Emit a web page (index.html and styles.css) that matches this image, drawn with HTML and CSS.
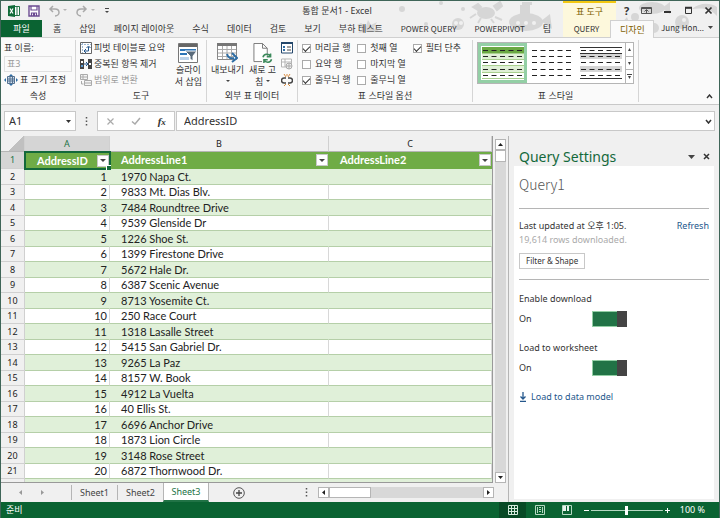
FILE: index.html
```
<!DOCTYPE html>
<html lang="ko">
<head>
    <meta charset="UTF-8">
    <meta name="viewport" content="width=device-width, initial-scale=1.0">
    <title>통합 문서1 - Excel</title>
    <link rel="stylesheet" href="styles.css">
</head>
<body>
    <div class="window">
        <header class="header">
            <svg class="header-art" width="370" height="36" viewBox="0 0 370 36" aria-hidden="true">
                <g fill="#d6d6d6">
                    <circle cx="53" cy="8" r="3"/><circle cx="114" cy="8" r="2"/><circle cx="92" cy="2" r="2"/><circle cx="77" cy="23" r="2"/>
                    <path d="M12 22l5 3 2-6 3 5 6-3-3 6 5 3-7 1-8 0-6 1 4-4-5-4z"/>
                    <circle cx="109" cy="23" r="6"/>
                    <ellipse cx="137" cy="12" rx="9" ry="6"/>
                    <path d="M124 6l5-3 3 3-3 3zM145 5l6-4 2 4-5 4zM127 13l-6 4M146 16l7 3M132 17l-3 5M142 18l3 4" stroke="#d6d6d6" stroke-width="2"/>
                    <ellipse cx="177" cy="21" rx="17" ry="9"/><path d="M171 14V4h10v10zM173 5V1h10v3h-7v2zM192 20l9-7 2 15z"/>
                    <circle cx="221" cy="7" r="5"/><circle cx="229" cy="15" r="3"/>
                    <path d="M261 24l6-5 5 4 6-7 3 8-7 7h-9z"/>
                    <ellipse cx="303" cy="7" rx="13" ry="6"/><path d="M313 7l8-6v12z"/><circle cx="286" cy="16" r="4"/>
                    <circle cx="333" cy="21" r="7"/><path d="M343 8c9-7 18-6 25-2v9c-7-8-15-8-25-7z"/><circle cx="305" cy="27" r="5"/>
                </g>
                <g fill="#f0f0f0"><circle cx="169" cy="22" r="2"/><circle cx="177" cy="22" r="2"/><circle cx="185" cy="22" r="2"/><circle cx="107" cy="22" r="2"/><circle cx="112" cy="22" r="2"/><circle cx="335" cy="19" r="2"/></g>
            </svg>
            <div class="title-row">
                <div class="quick-access">
                    <svg class="app-logo" width="12" height="12" viewBox="0 0 12 12" aria-hidden="true"><path d="M6 1.500h5.500v9H6" fill="#fff" stroke="#217346"/><path d="M8 3h2M8 5h2M8 7h2M8 9h2" stroke="#217346"/><path d="M0 1l7-1v12l-7-1z" fill="#0f6b38"/><path d="M2 3.500l3 5M5 3.500l-3 5" stroke="#fff" stroke-width="1.200"/></svg>
                    <button class="icon-button" aria-label="저장"><svg width="12" height="12" viewBox="0 0 12 12"><path d="M1 1h10v10H1z" fill="#fff" stroke="#6b4a91" stroke-width="1.400"/><path d="M3 1v4h6V1M3.500 11V8h5v3" fill="none" stroke="#6b4a91" stroke-width="1.200"/><path d="M5 8h2v3H5z" fill="#6b4a91"/></svg></button>
                    <button class="icon-button" aria-label="실행 취소"><svg width="20" height="12" viewBox="0 0 20 12"><path d="M5 1L2 4l3 3M2 4h5c3 0 4 2 4 3.500S9.500 11 7 11" fill="none" stroke="#a9a9a9" stroke-width="1.500"/><path d="M15 4h4l-2 2z" fill="#b5b5b5"/></svg></button>
                    <button class="icon-button" aria-label="다시 실행"><svg width="20" height="12" viewBox="0 0 20 12"><path d="M7 1l3 3-3 3M10 4H5C2 4 1 6 1 7.500S2.500 11 5 11" fill="none" stroke="#a9a9a9" stroke-width="1.500"/><path d="M15 4h4l-2 2z" fill="#b5b5b5"/></svg></button>
                    <button class="icon-button" aria-label="빠른 실행 도구 모음 사용자 지정"><svg width="6" height="6" viewBox="0 0 6 6"><path d="M1 .5h4" stroke="#444"/><path d="M1 3h4L3 5z" fill="#444"/></svg></button>
                </div>
                <h1 class="title">통합 문서1 - Excel</h1>
                <div class="context-title">표 도구</div>
                <div class="window-buttons">
                    <button class="icon-button help" aria-label="도움말">?</button>
                    <button class="icon-button" aria-label="리본 메뉴 표시 옵션"><svg width="11" height="9" viewBox="0 0 11 9"><path d="M.5 1.500h10v6H.5zM.5 2.500h10M5.500 7V4M3.500 5.500l2-2 2 2" fill="none" stroke="#555"/></svg></button>
                    <button class="icon-button" aria-label="최소화"><svg width="9" height="9" viewBox="0 0 9 9"><path d="M1 6h7" stroke="#333" stroke-width="2"/></svg></button>
                    <button class="icon-button" aria-label="최대화"><svg width="9" height="9" viewBox="0 0 9 9"><path d="M1.500 2h6v5.500h-6zM1 2h7" fill="none" stroke="#333"/><path d="M1 1.500h7" stroke="#333" stroke-width="1.500"/></svg></button>
                    <button class="icon-button" aria-label="닫기"><svg width="9" height="9" viewBox="0 0 9 9"><path d="M1.500 1.500l6 6M7.500 1.500l-6 6" stroke="#333" stroke-width="1.700"/></svg></button>
                </div>
            </div>
            <nav class="tab-row">
                <button class="file-tab">파일</button>
                <div class="tabs">
                    <button class="tab">홈</button>
                    <button class="tab">삽입</button>
                    <button class="tab">페이지 레이아웃</button>
                    <button class="tab">수식</button>
                    <button class="tab">데이터</button>
                    <button class="tab">검토</button>
                    <button class="tab">보기</button>
                    <button class="tab">부하 테스트</button>
                    <button class="tab latin">POWER QUERY</button>
                    <button class="tab latin">POWERPIVOT</button>
                    <button class="tab">팀</button>
                </div>
                <button class="tab latin context-tab">QUERY</button>
                <button class="tab active-tab">디자인</button>
                <button class="account latin">Jung Hon... <svg width="5" height="4" viewBox="0 0 5 4"><path d="M0 0h5L2.500 3z" fill="#444"/></svg></button>
            </nav>
        </header>

        <section class="ribbon">
            <div class="group group-properties">
                <div class="group-body rows">
                    <label for="table-name">표 이름:</label>
                    <input class="table-name" id="table-name" type="text" value="표3">
                    <button class="command"><svg width="14" height="12" viewBox="0 0 14 12"><path d="M3.500 2.500h7v7h-7zM3.500 5h7M3.500 7h7M6 2.500v7M8.500 2.500v7" fill="#cfe0f0" stroke="#55718f"/><path d="M5 2l2-2 2 2zM5 10l2 2 2-2zM2 4L0 6l2 2zM12 4l2 2-2 2z" fill="#2e6da4"/></svg>표 크기 조정</button>
                </div>
                <div class="group-label">속성</div>
            </div>
            <div class="group group-tools">
                <div class="group-body">
                    <div class="rows">
                        <button class="command"><svg width="12" height="12" viewBox="0 0 12 12"><path d="M.5.5h11v11H.5z" fill="#fff" stroke="#666"/><path d="M1 2.500h10M2.500 1v10" stroke="#9bb7d4" stroke-dasharray="2 1"/><path d="M5 9h3.500V5M4 9l2-2M4 9l2 2M8.500 4l-2 2M8.500 4l2 2" fill="none" stroke="#24578c"/></svg>피벗 테이블로 요약</button>
                        <button class="command"><svg width="12" height="12" viewBox="0 0 12 12"><path d="M0 1h4v10H0zM8 1h4v10H8z" fill="#444"/><path d="M1 3h2v2H1zM9 5h2v2H9z" fill="#fff"/><path d="M1 7h2v2H1z" fill="#5b9bd5"/><path d="M4 6h4M6 4l2 2-2 2" fill="none" stroke="#24578c"/></svg>중복된 항목 제거</button>
                        <button class="command" disabled><svg width="12" height="12" viewBox="0 0 12 12"><path d="M.5.5h7v5h-7zM.5 3h7M3 .5v5M4.500 6.500h7v5h-7zM4.500 9h7M1.500 7v3h2" fill="#f4f4f4" stroke="#aaa"/></svg>범위로 변환</button>
                    </div>
                    <button class="big-command"><svg width="20" height="20" viewBox="0 0 20 20"><path d="M.5.500h19v19H.5z" fill="#fff" stroke="#777"/><path d="M1 1h18v3H1z" fill="#666"/><path d="M2 6h16v2H2zM2 10h7v2H2z" fill="#2e75b6"/><path d="M2 14h9v3H2z" fill="#bcd2e8"/><path d="M7 8h12l-4 5v5l-3-2v-3z" fill="#5a6b7b" stroke="#fff"/></svg>슬라이<br>서 삽입</button>
                </div>
                <div class="group-label">도구</div>
            </div>
            <div class="group group-external">
                <div class="group-body">
                    <button class="big-command"><svg width="21" height="20" viewBox="0 0 21 20"><path d="M.5.500h19v16H.5z" fill="#fff" stroke="#888"/><path d="M0 0h20v3H0z" fill="#777"/><path d="M1 6.500h18M1 10h18M1 13.500h18M5.500 3v13M10 3v13M14.500 3v13" stroke="#aaa"/><path d="M10 11c1 4 4 5 7 4M15 10l5 5-5 4" fill="none" stroke="#2e6da4" stroke-width="2"/></svg>내보내기<span><svg width="5" height="4" viewBox="0 0 5 4"><path d="M1 0h4L3 2z" fill="#444"/></svg></span></button>
                    <button class="big-command"><svg width="21" height="20" viewBox="0 0 21 21"><path d="M1.500.500h9l5 5v14h-14zM10.500.500v5h5" fill="#fff" stroke="#777"/><path d="M10 14h11v7H10z" fill="#fafafa"/><path d="M11 15c1-4 6-4 8-1M19 11v3.500h-4M20 17c-1 4-6 4-8 1M12 21v-3.500h4" fill="none" stroke="#3c8a5c" stroke-width="1.600"/></svg>새로 고<br><span>침 <svg width="5" height="5" viewBox="0 0 5 5"><path d="M1 0h4L3 2z" fill="#444"/></svg></span></button>
                    <div class="rows">
                        <button class="icon-button" aria-label="속성"><svg width="12" height="12" viewBox="0 0 12 12"><path d="M.5 1h11v10H.5z" fill="#fff" stroke="#24476b"/><path d="M0 0h12v2H0z" fill="#24476b"/><path d="M2 4h2v2H2zM2 7h2v2H2z" fill="#2e6da4"/><path d="M6 5h4M6 8h4" stroke="#444"/></svg></button>
                        <button class="icon-button" aria-label="브라우저에서 열기" disabled><svg width="12" height="12" viewBox="0 0 12 12"><path d="M.5 1h10v8H.5zM.5 4h10M4 1v8" fill="#fff" stroke="#b5b5b5"/><circle cx="8" cy="8" r="3" fill="#eee" stroke="#aaa"/><path d="M5 8h6M8 5v6" stroke="#aaa"/></svg></button>
                        <button class="icon-button" aria-label="연결 끊기"><svg width="12" height="12" viewBox="0 0 12 12"><path d="M5 4H3a2 2 0 0 0 0 5h2M7 4h2a2 2 0 0 1 0 5H7" fill="none" stroke="#444" stroke-width="1.500"/><path d="M3 0l2 3M9 0L7 3M6 0v2M3 12l2-2M9 12l-2-2" stroke="#d98a3d"/></svg></button>
                    </div>
                </div>
                <div class="group-label">외부 표 데이터</div>
            </div>
            <div class="group group-options">
                <div class="group-body">
                    <div class="rows">
                        <label class="check"><input type="checkbox" checked>머리글 행</label>
                        <label class="check"><input type="checkbox">요약 행</label>
                        <label class="check"><input type="checkbox" checked>줄무늬 행</label>
                    </div>
                    <div class="rows">
                        <label class="check"><input type="checkbox">첫째 열</label>
                        <label class="check"><input type="checkbox">마지막 열</label>
                        <label class="check"><input type="checkbox">줄무늬 열</label>
                    </div>
                    <div class="rows">
                        <label class="check"><input type="checkbox" checked>필터 단추</label>
                    </div>
                </div>
                <div class="group-label">표 스타일 옵션</div>
            </div>
            <div class="group group-styles">
                <div class="group-body">
                    <div class="gallery">
                        <button class="style-item selected" aria-label="녹색 표 스타일"><svg width="42" height="32" viewBox="0 0 42 32"><path d="M0 0h42v32H0z" fill="#fff"/><path d="M0 0h42v6H0z" fill="#6aa842"/><path d="M0 6h42v6H0zM0 19h42v6H0z" fill="#e0f0d6"/><path d="M0 6.500h42M0 12.500h42M0 18.500h42M0 25.500h42M0 31.500h42" stroke="#a9d08e"/><path d="M1 3.500h40M1 9.500h40M1 15.500h40M1 22.500h40M1 28.500h40" stroke="#222" stroke-dasharray="5 3.500"/></svg></button>
                        <button class="style-item" aria-label="기본 표 스타일"><svg width="42" height="32" viewBox="0 0 42 32"><path d="M1 3.500h40M1 9.500h40M1 15.500h40M1 22.500h40M1 28.500h40" stroke="#222" stroke-dasharray="5 3.500"/></svg></button>
                        <button class="style-item" aria-label="회색 표 스타일"><svg width="42" height="32" viewBox="0 0 42 32"><path d="M0 7h42v5H0zM0 19h42v6H0z" fill="#d5d5d5"/><path d="M0 .500h42M0 6.500h42M0 31.500h42" stroke="#333"/><path d="M1 3.500h40M1 9.500h40M1 15.500h40M1 22.500h40M1 28.500h40" stroke="#222" stroke-dasharray="5 3.500"/></svg></button>
                        <div class="gallery-scroll">
                            <button aria-label="이전 행"><svg width="5" height="3" viewBox="0 0 5 3"><path d="M1 3h3L2.500 0z" fill="#444"/></svg></button>
                            <button aria-label="다음 행"><svg width="5" height="3" viewBox="0 0 5 3"><path d="M1 0h3L2.500 3z" fill="#444"/></svg></button>
                            <button aria-label="자세히"><svg width="5" height="5" viewBox="0 0 5 5"><path d="M0 .500h5" stroke="#444"/><path d="M1 2h3L2.500 5z" fill="#444"/></svg></button>
                        </div>
                    </div>
                </div>
                <div class="group-label">표 스타일</div>
            </div>
            <button class="icon-button collapse" aria-label="리본 메뉴 축소"><svg width="7" height="5" viewBox="0 0 7 5"><path d="M1 4l2.500-3L6 4" fill="none" stroke="#333" stroke-width="1.400"/></svg></button>
        </section>

        <section class="formula-bar">
            <div class="name-box">
                <input type="text" value="A1" aria-label="이름 상자">
                <button class="icon-button" aria-label="이름 목록"><svg width="5" height="3" viewBox="0 0 5 3"><path d="M0 0h5L2.500 3z" fill="#333"/></svg></button>
            </div>
            <svg class="grip" width="3" height="9" viewBox="0 0 3 9" aria-hidden="true"><path d="M1.500 0v9" stroke="#555" stroke-width="1.500" stroke-dasharray="1.500 2"/></svg>
            <div class="formula-buttons">
                <button class="icon-button" aria-label="취소"><svg width="9" height="9" viewBox="0 0 9 9"><path d="M1.500 1.500l6 6M7.500 1.500l-6 6" stroke="#aaa" stroke-width="1.200"/></svg></button>
                <button class="icon-button" aria-label="입력"><svg width="10" height="8" viewBox="0 0 10 8"><path d="M1 4.500L4 7l5-6" fill="none" stroke="#aaa" stroke-width="1.500"/></svg></button>
                <button class="icon-button fx" aria-label="함수 삽입">f<small>x</small></button>
            </div>
            <div class="formula-input">
                <input type="text" value="AddressID" aria-label="수식 입력줄">
                <button class="icon-button" aria-label="수식 입력줄 확장"><svg width="7" height="5" viewBox="0 0 7 5"><path d="M1 1l2.500 3L6 1" fill="none" stroke="#333" stroke-width="1.500"/></svg></button>
            </div>
        </section>

        <main class="workspace">
            <div class="sheet-area">
                <div class="sheet-view">
                    <table class="sheet">
                        <colgroup><col class="col-number"><col class="col-a"><col class="col-b"><col></colgroup>
                        <thead>
                            <tr class="letters"><th class="corner"></th><th class="current">A</th><th>B</th><th>C</th></tr>
                        </thead>
                        <tbody>
                            <tr class="fields">
                                <th class="current">1</th>
                                <td class="cursor"><div class="field"><span>AddressID</span><button class="filter" aria-label="AddressID 필터"></button></div></td>
                                <td><div class="field"><span>AddressLine1</span><button class="filter" aria-label="AddressLine1 필터"></button></div></td>
                                <td><div class="field"><span>AddressLine2</span><button class="filter" aria-label="AddressLine2 필터"></button></div></td>
                            </tr>
                            <tr><th>2</th><td>1</td><td>1970 Napa Ct.</td><td></td></tr>
                            <tr><th>3</th><td>2</td><td>9833 Mt. Dias Blv.</td><td></td></tr>
                            <tr><th>4</th><td>3</td><td>7484 Roundtree Drive</td><td></td></tr>
                            <tr><th>5</th><td>4</td><td>9539 Glenside Dr</td><td></td></tr>
                            <tr><th>6</th><td>5</td><td>1226 Shoe St.</td><td></td></tr>
                            <tr><th>7</th><td>6</td><td>1399 Firestone Drive</td><td></td></tr>
                            <tr><th>8</th><td>7</td><td>5672 Hale Dr.</td><td></td></tr>
                            <tr><th>9</th><td>8</td><td>6387 Scenic Avenue</td><td></td></tr>
                            <tr><th>10</th><td>9</td><td>8713 Yosemite Ct.</td><td></td></tr>
                            <tr><th>11</th><td>10</td><td>250 Race Court</td><td></td></tr>
                            <tr><th>12</th><td>11</td><td>1318 Lasalle Street</td><td></td></tr>
                            <tr><th>13</th><td>12</td><td>5415 San Gabriel Dr.</td><td></td></tr>
                            <tr><th>14</th><td>13</td><td>9265 La Paz</td><td></td></tr>
                            <tr><th>15</th><td>14</td><td>8157 W. Book</td><td></td></tr>
                            <tr><th>16</th><td>15</td><td>4912 La Vuelta</td><td></td></tr>
                            <tr><th>17</th><td>16</td><td>40 Ellis St.</td><td></td></tr>
                            <tr><th>18</th><td>17</td><td>6696 Anchor Drive</td><td></td></tr>
                            <tr><th>19</th><td>18</td><td>1873 Lion Circle</td><td></td></tr>
                            <tr><th>20</th><td>19</td><td>3148 Rose Street</td><td></td></tr>
                            <tr><th>21</th><td>20</td><td>6872 Thornwood Dr.</td><td></td></tr>
                            <tr class="cut"><th></th><td></td><td></td><td></td></tr>
                        </tbody>
                    </table>
                    <div class="scroll-v">
                        <button aria-label="위로"><svg width="5" height="3" viewBox="0 0 5 3"><path d="M0 3h5L2.500 0z" fill="#222"/></svg></button>
                        <div class="thumb"></div>
                        <button class="end" aria-label="아래로"><svg width="5" height="3" viewBox="0 0 5 3"><path d="M0 0h5L2.500 3z" fill="#222"/></svg></button>
                    </div>
                </div>
                <div class="sheet-bar">
                    <div class="sheet-nav">
                        <button class="icon-button" aria-label="이전 시트"><svg width="4" height="5" viewBox="0 0 4 5"><path d="M3 0v5L0 2.500z" fill="#999"/></svg></button>
                        <button class="icon-button" aria-label="다음 시트"><svg width="4" height="5" viewBox="0 0 4 5"><path d="M1 0v5l3-2.500z" fill="#999"/></svg></button>
                    </div>
                    <div class="sheet-tabs">
                        <button class="sheet-tab">Sheet1</button>
                        <button class="sheet-tab">Sheet2</button>
                        <button class="sheet-tab selected">Sheet3</button>
                    </div>
                    <button class="icon-button add-sheet" aria-label="새 시트"><svg width="12" height="12" viewBox="0 0 12 12"><circle cx="6" cy="6" r="5.300" fill="none" stroke="#555"/><path d="M6 3v6M3 6h6" stroke="#444" stroke-width="1.300"/></svg></button>
                    <svg class="grip" width="3" height="9" viewBox="0 0 3 9" aria-hidden="true"><path d="M1.500 0v9" stroke="#555" stroke-width="1.500" stroke-dasharray="1.500 2"/></svg>
                    <div class="scroll-h">
                        <button aria-label="왼쪽으로"><svg width="3" height="5" viewBox="0 0 3 5"><path d="M3 0v5L0 2.500z" fill="#222"/></svg></button>
                        <div class="thumb"></div>
                        <button class="end" aria-label="오른쪽으로"><svg width="3" height="5" viewBox="0 0 3 5"><path d="M0 0v5l3-2.500z" fill="#222"/></svg></button>
                    </div>
                </div>
            </div>

            <aside class="pane">
                <div class="pane-head">
                    <h2>Query Settings</h2>
                    <button class="icon-button" aria-label="작업창 옵션"><svg width="7" height="4" viewBox="0 0 7 4"><path d="M0 0h7L3.500 4z" fill="#444"/></svg></button>
                    <button class="icon-button" aria-label="작업창 닫기"><svg width="7" height="7" viewBox="0 0 7 7"><path d="M1 1l5 5M6 1L1 6" stroke="#333" stroke-width="1.500"/></svg></button>
                </div>
                <div class="pane-body">
                    <h3>Query1</h3>
                    <div class="status-line"><span>Last updated at 오후 1:05.</span><a href="#">Refresh</a></div>
                    <p class="row-count">19,614 rows downloaded.</p>
                    <button class="shape-button">Filter &amp; Shape</button>
                    <hr>
                    <div class="setting">
                        <label for="enable-download">Enable download</label>
                        <div class="setting-row"><span>On</span><input class="toggle" id="enable-download" type="checkbox" role="switch" checked></div>
                    </div>
                    <div class="setting">
                        <label for="load-worksheet">Load to worksheet</label>
                        <div class="setting-row"><span>On</span><input class="toggle" id="load-worksheet" type="checkbox" role="switch" checked></div>
                    </div>
                    <a class="load-link" href="#"><svg width="8" height="10" viewBox="0 0 8 10"><path d="M4 0v7M1.500 4.500L4 7l2.500-2.500M1 9.300h6" fill="none" stroke="#24578c" stroke-width="1.300"/></svg>Load to data model</a>
                </div>
            </aside>
        </main>

        <footer class="status-bar">
            <span>준비</span>
            <div class="views">
                <button class="view selected" aria-label="기본"><svg width="10" height="10" viewBox="0 0 10 10"><path d="M.5.500h9v9h-9zM.5 3.500h9M.5 6.500h9M3.500.500v9M6.500.500v9" fill="none" stroke="#d5eadc"/></svg></button>
                <button class="view" aria-label="페이지 레이아웃"><svg width="10" height="10" viewBox="0 0 10 10"><path d="M.5.500h9v9h-9zM2.500 2v6M7.500 2v6M4 2.500h2M4 4.500h2M4 6.500h2" fill="none" stroke="#b5d8c2"/></svg></button>
                <button class="view" aria-label="페이지 나누기 미리 보기"><svg width="10" height="10" viewBox="0 0 10 10"><path d="M.5.500h9v9h-9z" fill="none" stroke="#b5d8c2"/><path d="M1 1h3v5H1zM5 1h2v5H5z" fill="#e8f3ec"/></svg></button>
            </div>
            <div class="zoom">
                <button aria-label="축소"><svg width="5" height="5" viewBox="0 0 5 5"><path d="M0 2.500h5" stroke="#fff"/></svg></button>
                <input type="range" min="10" max="190" value="100" aria-label="확대/축소">
                <button aria-label="확대"><svg width="5" height="5" viewBox="0 0 5 5"><path d="M0 2.500h5M2.500 0v5" stroke="#fff"/></svg></button>
                <span>100 %</span>
            </div>
        </footer>
    </div>
</body>
</html>
```
FILE: styles.css
```
* {
    box-sizing: border-box;
}

body {
    margin: 0;
    background-color: #f0f0f0;
    color: #333;
    font-family: "Noto Sans", "Noto Sans CJK KR", sans-serif;
    font-size: 9px;
    line-height: 12px;
}

button, input {
    margin: 0;
    padding: 0;
    border: 0;
    border-radius: 0;
    background: none;
    color: inherit;
    font: inherit;
}

button {
    cursor: pointer;
}

svg {
    display: block;
    flex: none;
}

h1, h2, h3, p {
    margin: 0;
    font-weight: normal;
}

a {
    color: #24578c;
    text-decoration: none;
}

.window {
    display: flex;
    flex-direction: column;
    min-height: 100vh;
    border: 1px solid #3f6558;
    border-bottom: 0;
}

.icon-button {
    display: flex;
    align-items: center;
    justify-content: center;
}

/* title and tabs */
.header {
    position: relative;
    border-bottom: 1px solid #d0d0d0;
}

.header-art {
    position: absolute;
    top: 0;
    right: 0;
}

.title-row, .tab-row {
    position: relative;
    display: flex;
}

.title-row {
    height: 19px;
}

.quick-access {
    display: flex;
    align-items: center;
    gap: 8px;
    width: 110px;
    padding-left: 7px;
}

.title {
    flex: 1;
    font-size: 9px;
    line-height: 20px;
    text-align: center;
}

.context-title {
    width: 53px;
    border-top: 2px solid #f2c811;
    background-color: #fdf8dc;
    color: #806000;
    line-height: 17px;
    text-align: center;
}

.window-buttons {
    display: flex;
    align-items: center;
    justify-content: space-between;
    width: 103px;
    padding: 0 6px 0 8px;
}

.help {
    font-size: 11px;
    font-weight: bold;
}

.tab-row {
    height: 17px;
    font-family: "Noto Sans CJK KR", sans-serif;
}

.file-tab {
    flex: none;
    width: 41px;
    background-color: #0a6332;
    color: #fff;
}

.tabs {
    display: flex;
    flex: 1;
    min-width: 0;
    padding-left: 2px;
}

.tab {
    padding: 0 9px;
    white-space: nowrap;
}

.latin {
    font-size: 8px;
}

.context-tab {
    flex: none;
    width: 47px;
    background-color: #fdf8dc;
}

.active-tab {
    flex: none;
    width: 44px;
    margin-bottom: -1px;
    border: 1px solid #d0d0d0;
    border-bottom: 0;
    background-color: #fafafa;
    color: #806000;
}

.account {
    display: flex;
    flex: none;
    align-items: center;
    justify-content: space-between;
    width: 65px;
    padding: 0 6px 2px 7px;
    white-space: nowrap;
}

/* ribbon */
.ribbon {
    display: flex;
    padding: 2px 0;
    border-bottom: 1px solid #c8c8c8;
    background-color: #fafafa;
}

.group {
    display: flex;
    flex-direction: column;
    border-right: 1px solid #d5d5d5;
}

.group-body {
    display: flex;
    height: 48px;
}

.rows {
    display: flex;
    flex-direction: column;
}

.rows > * {
    height: 16px;
    line-height: 16px;
    white-space: nowrap;
}

.group-label {
    padding-top: 1px;
    line-height: 13px;
    text-align: center;
}

.group-properties {
    width: 75px;
    padding: 0 3px;
}

.table-name {
    width: 100%;
    padding: 0 2px;
    border: 1px solid #e0e0e0;
    color: #999;
}

.command {
    display: flex;
    align-items: center;
    gap: 2px;
}

.command:disabled {
    color: #999;
}

.big-command {
    display: flex;
    flex-direction: column;
    align-items: center;
    padding-top: 3px;
    line-height: 12px;
    white-space: nowrap;
}

.big-command > svg {
    margin-bottom: 1px;
}

.big-command span {
    display: flex;
    align-items: center;
    gap: 2px;
    min-height: 12px;
}

.group-tools {
    width: 131px;
    padding: 0 4px;
}

.group-tools .group-body, .group-external .group-body {
    justify-content: space-between;
}

.group-external {
    width: 91px;
    padding: 0 4px;
}

.group-options {
    width: 175px;
    padding: 0 4px;
}

.group-options .rows {
    width: 56px;
}

.check {
    display: flex;
    align-items: center;
    gap: 4px;
}

.check input {
    display: grid;
    place-items: center;
    width: 9px;
    height: 9px;
    border: 1px solid #aaa;
    background-color: #fff;
    appearance: none;
}

.check input:checked::before {
    content: "";
    width: 6px;
    height: 3px;
    border-bottom: 1px solid #333;
    border-left: 1px solid #333;
    transform: rotate(-45deg);
}

.group-styles {
    width: 166px;
    padding: 0 4px;
}

.gallery {
    display: flex;
    flex: 1;
    height: 42px;
    margin-top: 2px;
    border: 1px solid #b5b5b5;
    background-color: #fff;
}

.style-item {
    display: flex;
    align-items: center;
    justify-content: center;
    width: 49px;
}

.style-item.selected {
    border: 3px solid #93cfa5;
}

.gallery-scroll {
    display: flex;
    flex: 1;
    flex-direction: column;
    border-left: 1px solid #b5b5b5;
}

.gallery-scroll button {
    display: flex;
    flex: 1;
    align-items: center;
    justify-content: center;
}

.gallery-scroll button + button {
    border-top: 1px solid #b5b5b5;
}

.collapse {
    align-self: flex-end;
    width: 16px;
    height: 12px;
    margin-right: 2px;
    margin-left: auto;
}

/* formula bar */
.formula-bar {
    display: flex;
    align-items: center;
    padding: 6px 4px 5px 3px;
    font-size: 11px;
}

.name-box, .formula-buttons, .formula-input {
    display: flex;
    align-items: center;
    height: 20px;
    border: 1px solid #c8c8c8;
    background-color: #fff;
}

.name-box {
    width: 72px;
    padding: 0 4px;
}

.name-box input, .formula-input input {
    flex: 1;
    width: 0;
}

.formula-bar .grip {
    margin: 0 9px;
}

.formula-buttons {
    justify-content: space-around;
    width: 78px;
    margin-right: 1px;
}

.fx {
    align-items: baseline;
    font-family: "Liberation Serif", serif;
    font-style: italic;
    font-weight: bold;
}

.fx small {
    font-size: 9px;
}

.formula-input {
    flex: 1;
    padding: 0 2px 0 7px;
}

/* sheet */
.workspace {
    display: flex;
    flex: 1;
}

.sheet-area {
    display: flex;
    flex: 1;
    flex-direction: column;
}

.sheet-view {
    display: flex;
    gap: 2px;
    padding-right: 2px;
}

.sheet {
    flex: 1;
    border-right: 1px solid #999;
    border-bottom: 1px solid #999;
    border-spacing: 0;
    background-color: #fff;
    color: #222;
    font-family: Lato, "Noto Sans", sans-serif;
    font-size: 11px;
    line-height: 14px;
    table-layout: fixed;
}

.col-number {
    width: 24px;
}

.col-a {
    width: 85px;
}

.col-b {
    width: 219px;
}

.sheet th, .sheet td {
    padding: 0;
    border-right: 1px solid #d8d8d8;
    border-bottom: 1px solid #b5cfa8;
}

.sheet th {
    border-color: #d0d0d0;
    background-color: #f0f0f0;
    font-family: "Noto Sans", sans-serif;
    font-size: 9px;
    font-weight: normal;
}

.sheet .letters th {
    height: 16px;
    border-bottom-color: #b5b5b5;
}

.sheet .letters .corner {
    background: linear-gradient(135deg, #f0f0f0 60%, #c0c0c0 60%);
}

.sheet .current {
    background-color: #d5d5d5;
    color: #217346;
}

.sheet td {
    padding: 0 2px 0 11px;
    white-space: nowrap;
}

.sheet td:nth-child(2) {
    text-align: right;
}

.sheet tr:nth-child(even) td {
    height: 16px;
    border-right-color: #e0f0d9;
    background-color: #e0f0d9;
}

.sheet .fields td {
    height: 17px;
    padding-right: 0;
    border-color: #6fac46;
    background-color: #6fac46;
    color: #fff;
    font-weight: bold;
}

.sheet .fields .cursor {
    position: relative;
    border: 1px solid #14693b;
    outline: 1px solid #14693b;
}

/* fill handle */
.cursor::after {
    content: "";
    position: absolute;
    right: -2px;
    bottom: -2px;
    width: 4px;
    height: 4px;
    border-top: 1px solid #fff;
    border-left: 1px solid #fff;
    background-color: #14693b;
}

.sheet .cut:nth-child(even) td, .sheet .cut th {
    height: 3px;
    border-bottom: 0;
    line-height: 1px;
}

.field {
    display: flex;
    align-items: center;
    justify-content: space-between;
}

.filter {
    display: grid;
    place-items: center;
    width: 12px;
    height: 12px;
    border: 1px solid #c8c8c8;
    background-color: #fff;
}

.filter::before {
    content: "";
    border-top: 3px solid #444;
    border-right: 3px solid transparent;
    border-left: 3px solid transparent;
}

.scroll-v, .scroll-h {
    display: flex;
    background-color: #d8d8d8;
}

.scroll-v {
    flex-direction: column;
    width: 11px;
    margin-top: 3px;
}

.scroll-v button, .scroll-h button {
    display: flex;
    align-items: center;
    justify-content: center;
    width: 11px;
    height: 11px;
    border: 1px solid #b5b5b5;
    background-color: #fff;
}

.thumb {
    border: 1px solid #b5b5b5;
    background-color: #fff;
}

.scroll-v .thumb {
    height: 12px;
}

.scroll-v .end {
    margin-top: auto;
}

.sheet-bar {
    display: flex;
    align-items: center;
    height: 19px;
    padding-right: 14px;
}

.sheet-nav {
    display: flex;
    justify-content: space-between;
    width: 70px;
    padding: 0 27px 0 18px;
}

.sheet-tabs {
    display: flex;
    align-self: stretch;
}

.sheet-tab {
    width: 46px;
    margin: 2px 0;
    border-left: 1px solid #b5b5b5;
    color: #444;
}

.sheet-tab.selected {
    margin: 0;
    border-right: 1px solid #b5b5b5;
    border-bottom: 2px solid #217346;
    background-color: #fff;
    color: #217346;
}

.add-sheet {
    margin-left: 24px;
}

.sheet-bar .grip {
    margin: 0 10px 0 auto;
}

.scroll-h {
    width: 176px;
}

.scroll-h .thumb {
    width: 42px;
}

.scroll-h .end {
    margin-left: auto;
}

/* query pane */
.pane {
    width: 211px;
    padding: 0 5px;
    border-left: 1px solid #b5b5b5;
}

.pane-head {
    display: flex;
    align-items: center;
    gap: 8px;
    height: 30px;
    padding: 11px 4px 0 5px;
}

.pane-head h2 {
    flex: 1;
    color: #14693b;
    font-size: 14px;
}

.pane-body {
    padding: 10px 5px 96px;
    background-color: #fff;
}

.pane-body h3 {
    height: 33px;
    margin-bottom: 10px;
    border-bottom: 1px solid #b5b5b5;
    color: #555;
    font-family: "Noto Sans CJK KR", sans-serif;
    font-size: 14px;
    font-weight: 300;
    line-height: 16px;
}

.status-line {
    display: flex;
    justify-content: space-between;
    line-height: 14px;
}

.row-count {
    color: #aaa;
    line-height: 14px;
}

.shape-button {
    height: 16px;
    margin-top: 6px;
    padding: 0 6px;
    border: 1px solid #c8c8c8;
    font-size: 8px;
    line-height: 14px;
}

.pane-body hr {
    margin: 10px 0 13px;
    border: 0;
    border-top: 1px solid #b5b5b5;
}

.setting {
    margin-bottom: 15px;
}

.setting label {
    display: block;
}

.setting-row {
    display: flex;
    align-items: center;
    height: 16px;
    margin-top: 6px;
}

.setting-row span {
    width: 73px;
}

.toggle {
    width: 35px;
    height: 16px;
    border: 1px solid #93cfa5;
    background: linear-gradient(#217346, #217346);
    appearance: none;
}

.toggle::before {
    content: "";
    display: block;
    width: 10px;
    height: 16px;
    margin: -1px -1px 0 auto;
    background-color: #444;
}

.load-link {
    display: flex;
    align-items: center;
    gap: 4px;
}

/* status bar */
.status-bar {
    display: flex;
    align-items: center;
    height: 16px;
    padding-left: 5px;
    background-color: #0a6332;
    color: #fff;
}

.views {
    display: flex;
    margin-left: auto;
}

.view {
    display: flex;
    align-items: center;
    justify-content: center;
    width: 27px;
    height: 16px;
}

.view.selected {
    background-color: #084a26;
}

.zoom {
    display: flex;
    align-items: center;
    gap: 2px;
    width: 139px;
    padding: 0 14px 0 4px;
}

.zoom input {
    flex: 1;
    width: 0;
    height: 9px;
    background: linear-gradient(#b5d8c2, #b5d8c2) center / 100% 1px no-repeat;
    appearance: none;
}

.zoom input::-webkit-slider-thumb {
    width: 3px;
    height: 9px;
    background-color: #fff;
    appearance: none;
}

.zoom span {
    margin-left: 8px;
}
```
